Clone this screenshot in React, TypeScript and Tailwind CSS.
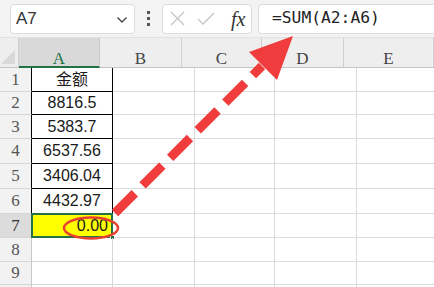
import React from "react";

const rowHeights = [24, 23, 24, 25, 25, 25, 24, 24, 23, 23];
const values = ["金额", "8816.5", "5383.7", "6537.56", "3406.04", "4432.97"];
const colW = [81, 82, 80, 82, 90];

export default function App() {
  return (
    <div className="relative w-[434px] h-[287px] overflow-hidden bg-white" style={{ fontFamily: '"Liberation Sans", "Noto Sans CJK SC", sans-serif' }}>
      {/* toolbar */}
      <div className="flex items-center h-[38px] bg-[#f3f3f3] border-b border-[#e2e2e2] pl-[10px]">
        <div className="flex items-center justify-between w-[125px] h-[30px] bg-white border border-[#dcdcdc] rounded-[4px] pl-[5px] pr-[6px]">
          <span className="text-[17px] text-[#333] leading-none">A7</span>
          <svg width="12" height="8" viewBox="0 0 12 8" className="mt-[2px]">
            <path d="M1.5 1.5 L6 6 L10.5 1.5" fill="none" stroke="#444" strokeWidth="1.3" />
          </svg>
        </div>
        <div className="flex flex-col items-center gap-[3px] w-[27px]">
          <span className="w-[3px] h-[3px] bg-[#555]" />
          <span className="w-[3px] h-[3px] bg-[#555]" />
          <span className="w-[3px] h-[3px] bg-[#555]" />
        </div>
        <div className="flex items-center w-[90px] h-[30px] bg-white border border-[#dcdcdc] rounded-[4px] pl-[7px]">
          <svg width="15" height="15" viewBox="0 0 15 15">
            <path d="M1 1 L14 14 M14 1 L1 14" stroke="#c4c4c4" strokeWidth="1.3" />
          </svg>
          <svg width="18" height="15" viewBox="0 0 18 15" className="ml-[12px]">
            <path d="M1 8 L6 13 L17 2" fill="none" stroke="#c4c4c4" strokeWidth="1.3" />
          </svg>
          <span className="ml-[16px] text-[20px] italic text-[#333] leading-none" style={{ fontFamily: '"Liberation Serif", serif' }}>fx</span>
        </div>
        <div className="flex items-center ml-[6px] flex-1 h-[30px] bg-white border border-[#dcdcdc] rounded-l-[4px] border-r-0 pl-[13px]">
          <span className="text-[16.3px] text-[#222] leading-none" style={{ fontFamily: '"DejaVu Sans Mono", monospace' }}>=SUM(A2:A6)</span>
        </div>
      </div>

      {/* column header */}
      <div className="flex h-[30px] bg-[#eeeeee] border-b border-[#c4c4c4]" style={{ fontFamily: '"Liberation Serif", serif' }}>
        <div className="relative w-[32px] border-r border-[#d0d0d0]">
          <svg width="14" height="14" viewBox="0 0 14 14" className="absolute right-[3px] bottom-[3px]">
            <path d="M14 0 L14 14 L0 14 Z" fill="#d8d8d8" />
          </svg>
        </div>
        {["A", "B", "C", "D", "E"].map((c, i) => (
          <div
            key={c}
            className={
              i === 0
                ? "flex items-start justify-center pt-[12px] w-[81px] bg-[#d9d9d9] border-b-2 border-[#217346] -mb-px text-[17px] leading-none text-[#217346] border-r border-r-[#c8c8c8]"
                : "flex items-start justify-center pt-[12px] text-[17px] leading-none text-[#444] border-r border-[#d0d0d0]"
            }
            style={{ width: colW[i], flexShrink: 0 }}
          >
            {c}
          </div>
        ))}
      </div>

      {/* rows */}
      {rowHeights.map((h, r) => {
        const inBox = r < 6;
        const isSel = r === 6;
        return (
          <div key={r} className="flex" style={{ height: h }}>
            <div
              className={
                "flex items-center justify-center w-[32px] shrink-0 border-b border-[#d6d6d6] text-[17px] " +
                (isSel ? "bg-[#dcdcdc] text-[#333] " : "bg-[#f2f2f2] text-[#555] ") +
                (inBox ? "border-r border-r-black" : "border-r border-r-[#c8c8c8]")
              }
              style={{ fontFamily: '"Liberation Serif", serif' }}
            >
              {r < 9 ? r + 1 : ""}
            </div>
            <div
              className={
                "relative flex items-center shrink-0 text-[16px] text-[#1a1a1a] " +
                (inBox
                  ? "justify-center border-r border-b border-black"
                  : isSel
                  ? "justify-end pr-[4px] bg-[#ffff00] border-r border-b border-[#d6d6d6]"
                  : "border-r border-b border-[#d6d6d6]")
              }
              style={{ width: colW[0] }}
            >
              {inBox ? values[r] : isSel ? "0.00" : ""}
              {isSel && (
                <div className="absolute -left-px -top-px -right-px -bottom-px border-2 border-[#217346]">
                  <div className="absolute -right-[4px] -bottom-[4px] w-[5px] h-[5px] bg-[#217346] border border-white" />
                </div>
              )}
            </div>
            {colW.slice(1).map((w, i) => (
              <div key={i} className="shrink-0 border-r border-b border-[#dadada]" style={{ width: w }} />
            ))}
          </div>
        );
      })}

      {/* annotation overlay */}
      <svg className="absolute left-0 top-0 pointer-events-none" width="434" height="287" viewBox="0 0 434 287">
        <ellipse cx="91" cy="228" rx="27" ry="10.5" fill="none" stroke="#e8412f" strokeWidth="2.5" />
        <line x1="115" y1="213" x2="262" y2="66" stroke="#f03c3c" strokeWidth="9" strokeDasharray="28 11" />
        <path d="M293 36 L249 52 L277 80 Z" fill="#f03c3c" />
      </svg>
    </div>
  );
}
